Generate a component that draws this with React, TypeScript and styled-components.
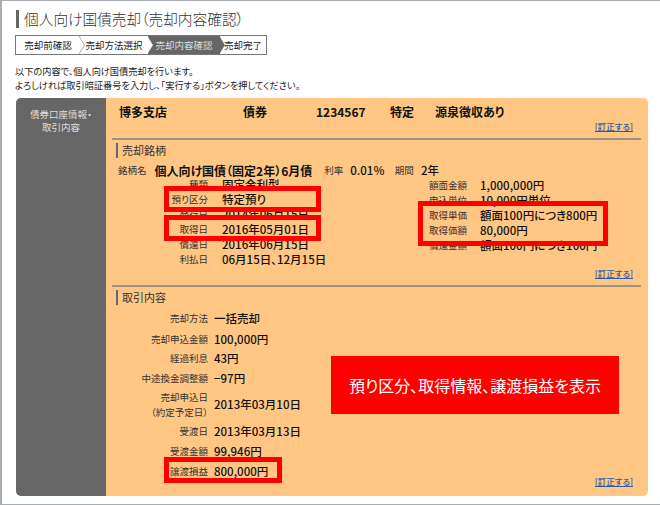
import React from "react";
import styled, { createGlobalStyle } from "styled-components";

const GlobalStyle = createGlobalStyle`
  html, body { margin: 0; padding: 0; background: #fff; }
  body {
    font-family: "Noto Sans CJK JP", "Liberation Sans", sans-serif;
    font-feature-settings: "palt";
    color: #222;
  }
`;

const Frame = styled.div`
  position: relative;
  box-sizing: border-box;
  width: 660px;
  height: 505px;
  border: solid #a9adb3;
  border-width: 1px 0 1px 2px;
  padding: 9px 12px 8px 14px;
  background: #fff;
  display: flex;
  flex-direction: column;
  overflow: hidden;
`;

const Title = styled.h1`
  margin: 0 0 7px 0;
  height: 18px;
  border-left: 3px solid #666;
  padding-left: 5px;
  font-size: 14.7px;
  line-height: 18px;
  font-weight: 300;
  color: #333;
  white-space: nowrap;
`;

const Steps = styled.ol`
  list-style: none;
  margin: 0 0 9px -1px;
  padding: 0;
  width: 252px;
  height: 20px;
  box-sizing: border-box;
  border: 1px solid #777;
  display: flex;
`;

const Step = styled.li<{ $current?: boolean; $w: number }>`
  position: relative;
  width: ${(p) => p.$w}px;
  text-align: center;
  font-size: 9.5px;
  line-height: 18px;
  white-space: nowrap;
  background: ${(p) => (p.$current ? "#666" : "#fff")};
  color: ${(p) => (p.$current ? "#ddd" : "#222")};
  svg {
    position: absolute;
    top: 0;
    right: -5px;
    z-index: 1;
  }
`;

const Intro = styled.p`
  margin: 0 0 6px -1px;
  font-size: 9.2px;
  line-height: 14px;
  color: #222;
  white-space: nowrap;
`;

const Panel = styled.div`
  flex: 1;
  width: 632px;
  display: flex;
  border-radius: 5px;
  overflow: hidden;
  background: #ffc684;
`;

const Side = styled.div`
  width: 90px;
  flex: none;
  box-sizing: border-box;
  background: #666;
  color: #ddd;
  padding-top: 10px;
  text-align: center;
  font-size: 9.5px;
  line-height: 13px;
`;

const Content = styled.div`
  flex: 1;
  padding: 6px 7px 9px 6px;
  display: flex;
  flex-direction: column;
`;

const Account = styled.div`
  display: flex;
  height: 16px;
  padding-left: 7px;
  font-size: 12px;
  line-height: 16px;
  font-weight: 700;
  color: #111;
`;

const AccountCell = styled.span<{ $w: number }>`
  width: ${(p) => p.$w}px;
  flex: none;
  white-space: nowrap;
`;

const LinkRow = styled.div<{ $mt: number }>`
  display: flex;
  justify-content: flex-end;
  height: 11px;
  padding-right: 8px;
  margin-top: ${(p) => p.$mt}px;
`;

const FixLink = styled.a`
  font-size: 8.5px;
  line-height: 10px;
  color: #2a5ca8;
  border-bottom: 1px solid #2a5ca8;
  font-weight: 500;
`;

const Section = styled.section`
  border-top: 2px solid #9a9187;
  margin-top: 6px;
  padding-top: 3px;
  display: flex;
  flex-direction: column;
`;

const Heading = styled.h2<{ $mb: number }>`
  margin: 0 0 ${(p) => p.$mb}px 4px;
  border-left: 2px solid #5f6b7a;
  padding-left: 4px;
  font-size: 11px;
  line-height: 15px;
  font-weight: 400;
  color: #333;
`;

const BrandRow = styled.div`
  display: flex;
  align-items: center;
  height: 13px;
  padding-left: 6px;
  font-size: 9.5px;
  line-height: 13px;
  color: #333;
  white-space: nowrap;
`;

const BrandName = styled.strong`
  font-size: 12px;
  color: #111;
  margin: 0 12px 0 8px;
`;

const BrandValue = styled.span`
  font-size: 11.5px;
  font-weight: 500;
  color: #111;
  margin: 0 10px 0 7px;
`;

const Columns = styled.div`
  display: flex;
`;

const LeftColumn = styled.div`
  width: 317px;
  flex: none;
`;

const RightColumn = styled.div`
  margin-top: 1px;
`;

const InfoTable = styled.dl<{ $labelW: number; $gap: number }>`
  margin: 0;
  display: grid;
  grid-template-columns: ${(p) => p.$labelW}px auto;
  column-gap: ${(p) => p.$gap}px;
  align-items: center;
  align-content: start;
`;

const Label = styled.dt<{ $h: number; $align: "left" | "right" }>`
  height: ${(p) => p.$h}px;
  display: flex;
  align-items: center;
  justify-content: ${(p) => (p.$align === "right" ? "flex-end" : "flex-start")};
  text-align: ${(p) => p.$align};
  font-size: 9.5px;
  line-height: 15px;
  color: #333;
  white-space: nowrap;
`;

const Value = styled.dd`
  margin: 0;
  font-size: 11.5px;
  line-height: 15px;
  font-weight: 500;
  color: #111;
  white-space: nowrap;
`;

const Spacer = styled.div`
  flex: 1;
`;

const Highlight = styled.div<{ $x: number; $y: number; $w: number; $h: number }>`
  position: absolute;
  box-sizing: border-box;
  left: ${(p) => p.$x}px;
  top: ${(p) => p.$y}px;
  width: ${(p) => p.$w}px;
  height: ${(p) => p.$h}px;
  border: 5px solid #f00;
`;

const Callout = styled.div`
  position: absolute;
  left: 329px;
  top: 355px;
  width: 288px;
  height: 58px;
  background: #f00;
  color: #fff;
  font-size: 16px;
  line-height: 58px;
  text-align: center;
  white-space: nowrap;
`;

const Fix = ({ mt }: { mt: number }) => (
  <LinkRow $mt={mt}>
    <FixLink>[訂正する]</FixLink>
  </LinkRow>
);

const brandLeft: [string, string][] = [
  ["種類", "固定金利型"],
  ["預り区分", "特定預り"],
  ["発行日", "2014年06月15日"],
  ["取得日", "2016年05月01日"],
  ["償還日", "2016年06月15日"],
  ["利払日", "06月15日、12月15日"],
];

const brandRight: [string, string][] = [
  ["額面金額", "1,000,000円"],
  ["申込単位", "10,000円単位"],
  ["取得単価", "額面100円につき800円"],
  ["取得価額", "80,000円"],
  ["償還金額", "額面100円につき100円"],
];

const trade: [React.ReactNode, string, number][] = [
  ["売却方法", "一括売却", 21],
  ["売却申込金額", "100,000円", 20],
  ["経過利息", "43円", 19],
  ["中途換金調整額", "−97円", 20],
  [<>売却申込日<br />（約定予定日）</>, "2013年03月10日", 33],
  ["受渡日", "2013年03月13日", 20],
  ["受渡金額", "99,946円", 20],
  ["譲渡損益", "800,000円", 20],
];

const Arrow = ({ fill, stroke }: { fill: string; stroke: string }) => (
  <svg width="6" height="18" viewBox="0 0 6 18">
    <path d="M0 0 L5.5 9 L0 18" fill={fill} stroke={stroke} strokeWidth="0.8" />
  </svg>
);

export default function App() {
  return (
    <>
      <GlobalStyle />
      <Frame>
        <Title>個人向け国債売却（売却内容確認）</Title>
        <Steps>
          <Step $w={64}>売却前確認<Arrow fill="#fff" stroke="#999" /></Step>
          <Step $w={68}>売却方法選択<Arrow fill="#fff" stroke="#fff" /></Step>
          <Step $w={72} $current>売却内容確認<Arrow fill="#666" stroke="#666" /></Step>
          <Step $w={46}>売却完了</Step>
        </Steps>
        <Intro>
          以下の内容で、個人向け国債売却を行います。<br />
          よろしければ取引暗証番号を入力し、「実行する」ボタンを押してください。
        </Intro>
        <Panel>
          <Side>債券口座情報・<br />取引内容</Side>
          <Content>
            <Account>
              <AccountCell $w={124}>博多支店</AccountCell>
              <AccountCell $w={73}>債券</AccountCell>
              <AccountCell $w={74}>1234567</AccountCell>
              <AccountCell $w={45}>特定</AccountCell>
              <AccountCell $w={100}>源泉徴収あり</AccountCell>
            </Account>
            <Fix mt={1} />
            <Section>
              <Heading $mb={6}>売却銘柄</Heading>
              <BrandRow>
                銘柄名<BrandName>個人向け国債（固定2年）6月債</BrandName>
                利率<BrandValue>0.01％</BrandValue>期間<BrandValue>2年</BrandValue>
              </BrandRow>
              <Columns>
                <LeftColumn>
                  <InfoTable $labelW={96} $gap={14}>
                    {brandLeft.map(([k, v]) => (
                      <React.Fragment key={k}>
                        <Label $h={15} $align="right">{k}</Label>
                        <Value>{v}</Value>
                      </React.Fragment>
                    ))}
                  </InfoTable>
                </LeftColumn>
                <RightColumn>
                  <InfoTable $labelW={38} $gap={13}>
                    {brandRight.map(([k, v]) => (
                      <React.Fragment key={k}>
                        <Label $h={15} $align="left">{k}</Label>
                        <Value>{v}</Value>
                      </React.Fragment>
                    ))}
                  </InfoTable>
                </RightColumn>
              </Columns>
              <Fix mt={1} />
            </Section>
            <Section>
              <Heading $mb={3}>取引内容</Heading>
              <InfoTable $labelW={96} $gap={6}>
                {trade.map(([k, v, h]) => (
                  <React.Fragment key={v}>
                    <Label $h={h} $align="right">{k}</Label>
                    <Value>{v}</Value>
                  </React.Fragment>
                ))}
              </InfoTable>
            </Section>
            <Spacer />
            <Fix mt={-5} />
          </Content>
        </Panel>
        <Highlight $x={162} $y={185} $w={157} $h={26} />
        <Highlight $x={162} $y={214} $w={157} $h={26} />
        <Highlight $x={416} $y={200} $w={190} $h={45} />
        <Highlight $x={162} $y={456} $w={118} $h={26} />
        <Callout>預り区分、取得情報、譲渡損益を表示</Callout>
      </Frame>
    </>
  );
}
